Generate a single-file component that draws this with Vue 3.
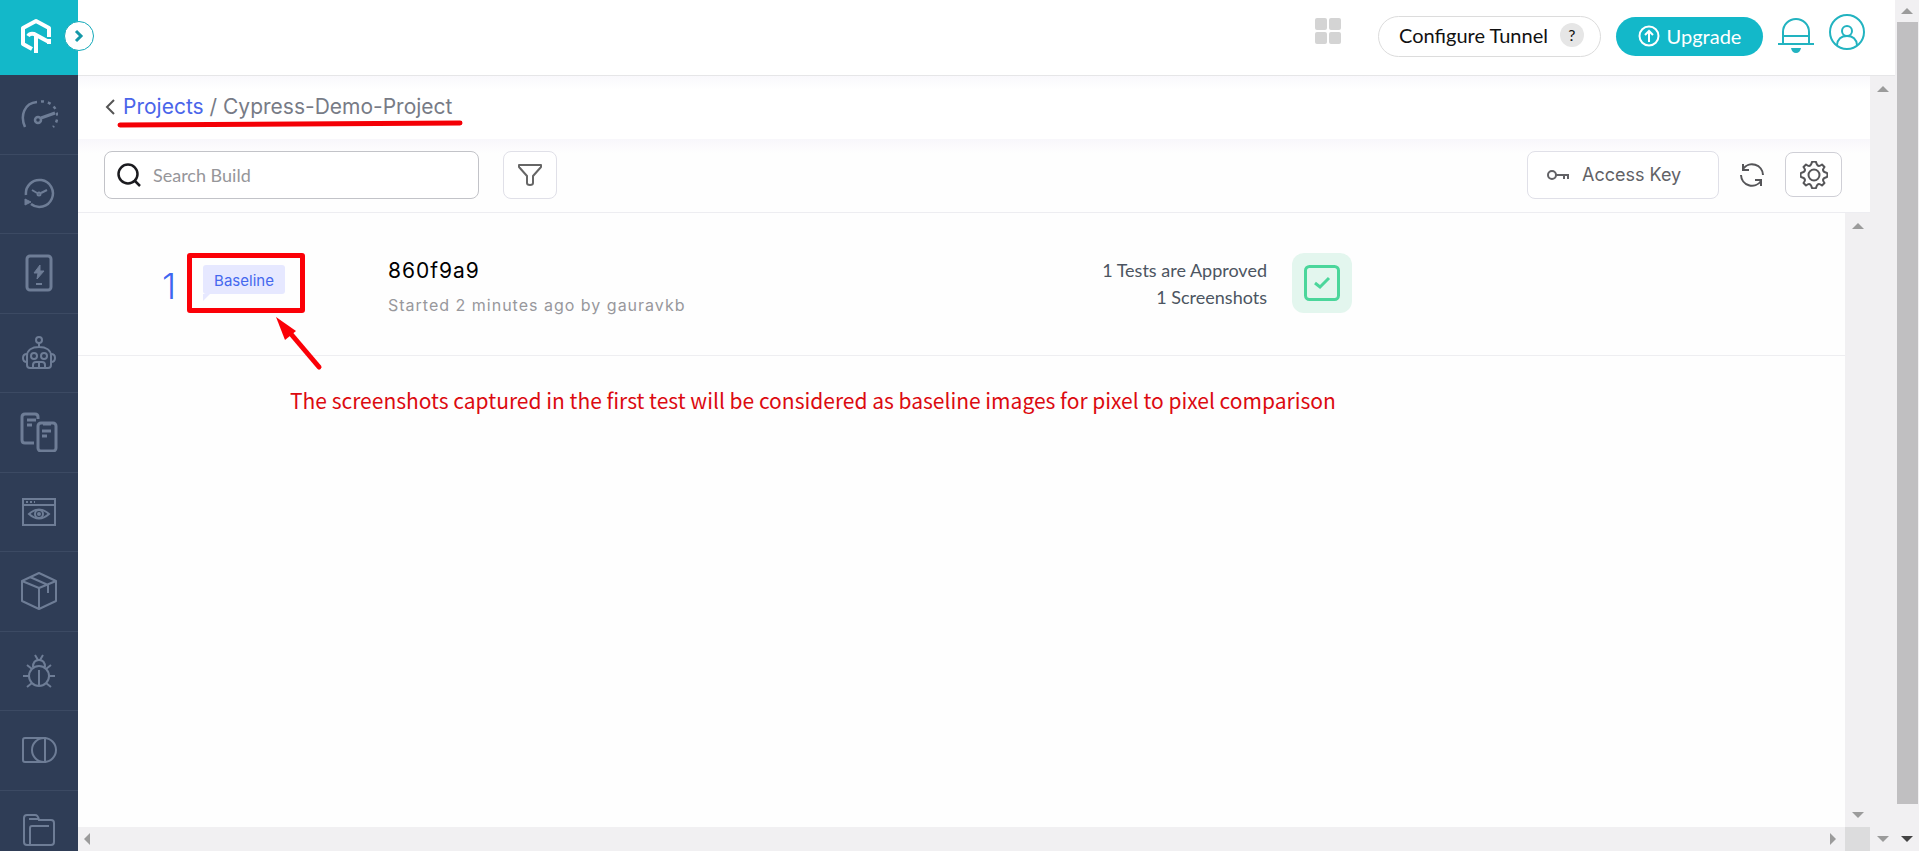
<script setup>
const navItems = [
  { name: 'Dashboard', icon: 'gauge' },
  { name: 'Real Time Testing', icon: 'history' },
  { name: 'Real Device', icon: 'device' },
  { name: 'Automation', icon: 'robot' },
  { name: 'App Automation', icon: 'phones' },
  { name: 'Visual UI Testing', icon: 'browser' },
  { name: 'Builds', icon: 'box' },
  { name: 'Issue Tracker', icon: 'bug' },
  { name: 'Integrations', icon: 'shapes' },
  { name: 'Projects', icon: 'folder' },
]
</script>

<template>
  <div class="shell">
    <aside class="sidebar">
      <a class="brand" href="#" aria-label="Home">
        <svg width="32" height="36" viewBox="0 0 32 36" fill="none" stroke="#fff" stroke-width="4">
          <path d="M12 31 L3 26 V10 L16 3 L29 10 V19" stroke-linejoin="round" />
          <path d="M8 18 Q10 15 14 16 L29 24 M29 21 V26" />
          <path d="M16 17 V35" />
        </svg>
      </a>
      <nav class="nav">
        <a v-for="item in navItems" :key="item.name" class="nav-item" href="#" :aria-label="item.name">
          <svg v-if="item.icon === 'gauge'" width="38" height="30" viewBox="0 0 38 30" fill="none" stroke="currentColor" stroke-width="2.500">
            <path d="M5 28 C0 17 4 4 17 3" />
            <circle cx="18" cy="21" r="3" />
            <path d="M21 19 L35 14" stroke-width="3" />
            <path d="M21 2.500 A15 15 0 0 1 33 28" stroke-dasharray="3 4" />
          </svg>
          <svg v-else-if="item.icon === 'history'" width="32" height="32" viewBox="0 0 32 32" fill="none" stroke="currentColor" stroke-width="2.500">
            <path d="M3 17 A13.500 13.500 0 1 1 8 26" />
            <circle cx="16" cy="16" r="1.500" stroke-width="2" />
            <path d="M9 12 L14 15 M18 15 L24 12" stroke-width="2" />
            <path d="M2 21 V27 L8 24 Z" fill="currentColor" stroke-width="1" />
          </svg>
          <svg v-else-if="item.icon === 'device'" width="28" height="38" viewBox="0 0 28 38" fill="none" stroke="currentColor" stroke-width="3">
            <rect x="2" y="2" width="24" height="34" rx="3" />
            <path d="M11 30 H17" stroke-width="2" />
            <path d="M15 11 L9 19 H13 L12 25 L19 17 H15 Z" fill="currentColor" stroke-width="1" />
          </svg>
          <svg v-else-if="item.icon === 'robot'" width="34" height="34" viewBox="0 0 34 34" fill="none" stroke="currentColor" stroke-width="2">
            <circle cx="17" cy="4" r="3" />
            <path d="M17 7 V11 M5 29 V20 C5 14 10 11 17 11 S29 14 29 20 V29 Q29 32 26 32 H8 Q5 32 5 29 Z" />
            <circle cx="12" cy="20" r="3" />
            <circle cx="22" cy="20" r="3" />
            <path d="M11 32 V29 Q11 26 14 26 H20 Q23 26 23 29 V32 M17 26 V32 M5 18 Q1 18 1 22 Q1 26 5 26 M29 18 Q33 18 33 22 Q33 26 29 26" />
          </svg>
          <svg v-else-if="item.icon === 'phones'" width="38" height="40" viewBox="0 0 38 40" fill="none" stroke="currentColor" stroke-width="3">
            <path d="M14 31 H5 Q2 31 2 28 V5 Q2 2 5 2 H15 Q18 2 18 5 V7" />
            <rect x="18" y="11" width="18" height="28" rx="3" />
            <path d="M7 8 H16 M7 13 H12 M22 19 H31 M22 24 H27 M23 12 H31" />
          </svg>
          <svg v-else-if="item.icon === 'browser'" width="34" height="28" viewBox="0 0 34 28" fill="none" stroke="currentColor" stroke-width="2">
            <rect x="1" y="1" width="32" height="26" />
            <path d="M1 7 H33" />
            <path d="M4 4 H13" stroke-dasharray="2 2" />
            <path d="M7 16 Q17 7 27 16 Q17 25 7 16 Z" />
            <circle cx="17" cy="16" r="4" />
            <circle cx="17" cy="16" r="1" />
          </svg>
          <svg v-else-if="item.icon === 'box'" width="36" height="38" viewBox="0 0 36 38" fill="none" stroke="currentColor" stroke-width="2" stroke-linejoin="round">
            <path d="M18 1 L35 9 V29 L18 37 L1 29 V9 Z M1 9 L18 16 L35 9 M18 16 V37 M9 5 L27 13 V21" />
          </svg>
          <svg v-else-if="item.icon === 'bug'" width="34" height="34" viewBox="0 0 34 34" fill="none" stroke="currentColor" stroke-width="2">
            <circle cx="17" cy="22" r="10" />
            <path d="M17 16 V32 M11 13 Q11 6 17 6 Q23 6 23 13 M16 6 L13 1 M18 6 L21 1 M1 22 H7 M27 22 H33 M5 11 L10 15 M29 11 L24 15 M5 33 L10 29 M29 33 L24 29" />
          </svg>
          <svg v-else-if="item.icon === 'shapes'" width="36" height="26" viewBox="0 0 36 26" fill="none" stroke="currentColor" stroke-width="2">
            <path d="M24 1 H4 Q2 1 2 3 V23 Q2 25 4 25 H24 Z" />
            <circle cx="23" cy="13" r="12" />
          </svg>
          <svg v-else width="32" height="32" viewBox="0 0 32 32" fill="none" stroke="currentColor" stroke-width="2">
            <path d="M4 31 Q1 31 1 28 V4 Q1 1 4 1 H12 Q15 1 16 6 H28 Q31 6 31 9 V28 Q31 31 28 31 Z" />
            <path d="M7 30 V14 Q7 12 9 12 H26 M6 5 H15" />
          </svg>
        </a>
      </nav>
      <button class="expand" type="button" aria-label="Expand menu">
        <svg width="12" height="14" viewBox="0 0 12 14" fill="none" stroke="#1498a8" stroke-width="3"><path d="M3 2 L8 7 L3 12" /></svg>
      </button>
    </aside>

    <div class="page">
      <header class="topbar">
        <button class="icon-btn apps" type="button" aria-label="Apps">
          <svg width="26" height="26" viewBox="0 0 26 26" fill="#d4d4d4"><rect width="12" height="12" rx="2" /><rect x="14" width="12" height="12" rx="2" /><rect y="14" width="12" height="12" rx="2" /><rect x="14" y="14" width="12" height="12" rx="2" /></svg>
        </button>
        <button class="tunnel" type="button">Configure Tunnel <span class="help">?</span></button>
        <button class="upgrade" type="button">
          <svg width="22" height="22" viewBox="0 0 22 22" fill="none" stroke="#fff" stroke-width="2"><circle cx="11" cy="11" r="9.500" /><path d="M11 17 V6 M7 10 L11 6 L15 10" /></svg>
          Upgrade
        </button>
        <button class="icon-btn bell" type="button" aria-label="Notifications">
          <svg width="36" height="36" viewBox="0 0 36 36" fill="none" stroke="#22b3c0" stroke-width="2"><path d="M5 26 V14 A13 13 0 0 1 31 14 V26 M0 26 H36 M5 18 H31" /><path d="M13 30 H23 Q22 35 18 35 Q14 35 13 30 Z" fill="#22b3c0" stroke="none" /></svg>
        </button>
        <button class="icon-btn user" type="button" aria-label="Account">
          <svg width="36" height="36" viewBox="0 0 36 36" fill="none" stroke="#22b3c0" stroke-width="2"><circle cx="18" cy="18" r="17" /><circle cx="18" cy="17" r="5" /><path d="M8 31 Q9 22 18 22 Q27 22 28 31" /></svg>
        </button>
      </header>

      <div class="body">
        <main class="content">
          <div class="crumbs">
            <a class="back" href="#" aria-label="Back"><svg width="10" height="16" viewBox="0 0 10 16" fill="none" stroke="#555" stroke-width="2"><path d="M9 1 L2 8 L9 15" /></svg></a>
            <nav class="trail" aria-label="Breadcrumb">
              <a href="#">Projects</a> / Cypress-Demo-Project
              <svg class="underline" width="346" height="8" viewBox="0 0 346 8"><path d="M3 5 L343 3" stroke="#f40006" stroke-width="5" stroke-linecap="round" /></svg>
            </nav>
          </div>

          <div class="toolbar">
            <label class="search">
              <svg width="24" height="24" viewBox="0 0 24 24" fill="none" stroke="#1b1b1f" stroke-width="2.500"><circle cx="11" cy="11" r="9.500" /><path d="M17 17 L23 23" /></svg>
              <input type="text" placeholder="Search Build" aria-label="Search Build" />
            </label>
            <button class="box filter" type="button" aria-label="Filter">
              <svg width="24" height="22" viewBox="0 0 24 22" fill="none" stroke="#666" stroke-width="2" stroke-linejoin="round"><path d="M1 1 H23 V3 L15 12 V19 Q15 21 12 21 Q9 21 9 19 V12 L1 3 Z" /></svg>
            </button>
            <button class="box access" type="button">
              <svg width="22" height="12" viewBox="0 0 22 12" fill="none" stroke="#626266" stroke-width="2"><circle cx="5" cy="6" r="4" /><path d="M9 6 H22 M17 6 V10 M21 6 V10" /></svg>
              Access Key
            </button>
            <button class="icon-btn" type="button" aria-label="Refresh">
              <svg width="24" height="24" viewBox="0 0 24 24" fill="none" stroke="#555558" stroke-width="2"><path d="M23 12 A11 11 0 0 0 3 6 M1 12 A11 11 0 0 0 21 18 M3 1 V7 H9 M21 23 V17 H15" /></svg>
            </button>
            <button class="box settings" type="button" aria-label="Settings">
              <svg width="28" height="28" viewBox="-14 -14 28 28" fill="none" stroke="#555558" stroke-width="2" stroke-linejoin="round">
                <path d="M-2 -13 Q0 -14 2 -13 Q3 -9 5 -9 Q6 -9 8 -10.500 L10.500 -8 Q9 -6 9 -5 Q9 -3 13 -2 Q14 0 13 2 Q9 3 9 5 Q9 6 10.500 8 L8 10.500 Q6 9 5 9 Q3 9 2 13 Q0 14 -2 13 Q-3 9 -5 9 Q-6 9 -8 10.500 L-10.500 8 Q-9 6 -9 5 Q-9 3 -13 2 Q-14 0 -13 -2 Q-9 -3 -9 -5 Q-9 -6 -10.500 -8 L-8 -10.500 Q-6 -9 -5 -9 Q-3 -9 -2 -13 Z" />
                <circle r="5.500" />
              </svg>
            </button>
          </div>

          <section class="builds">
            <div class="build-pane">
              <article class="build">
                <span class="number">1</span>
                <div class="marked">
                  <span class="tag">Baseline</span>
                  <svg class="arrow" width="54" height="60" viewBox="0 0 54 60"><path d="M49 55 L21 22" stroke="#fb0007" stroke-width="5" stroke-linecap="round" /><path d="M6 5 L26 19 L15 28 Z" fill="#fb0007" /></svg>
                </div>
                <div class="info">
                  <h2>860f9a9</h2>
                  <p>Started 2 minutes ago by gauravkb</p>
                </div>
                <div class="stats">1 Tests are Approved<br />1 Screenshots</div>
                <span class="approved">
                  <svg width="36" height="36" viewBox="0 0 36 36" fill="none" stroke="#4bd69b" stroke-width="3"><rect x="1.500" y="1.500" width="33" height="33" rx="4" /><path d="M11 18 L16 22 L25 13" /></svg>
                </span>
              </article>
              <p class="note">The screenshots captured in the first test will be considered as baseline images for pixel to pixel comparison</p>
            </div>
            <div class="vbar"><i class="tri up"></i><i class="tri down"></i></div>
            <div class="hbar"><i class="tri left"></i><i class="tri right"></i></div>
            <div class="corner"></div>
          </section>
        </main>
        <div class="vbar"><i class="tri up"></i><i class="tri down"></i></div>
      </div>
    </div>

    <div class="vbar outer"><i class="tri up"></i><div class="thumb"></div><i class="tri down dark"></i></div>
  </div>
</template>

<style>
body { overflow: hidden; }
</style>

<style scoped>
* { box-sizing: border-box; }
.shell { display: flex; height: 100vh; font-family: Lato, sans-serif; background: #fff; color: #111; }
button { font: inherit; color: inherit; background: none; border: 0; padding: 0; cursor: pointer; }
svg { display: block; flex: none; }
a { color: inherit; text-decoration: none; }

.sidebar { position: relative; z-index: 2; flex: none; width: 78px; display: flex; flex-direction: column; background: #2f3d56; }
.brand { flex: none; height: 75px; display: flex; align-items: center; justify-content: center; padding: 0 6px 4px 0; background: #13b8c9; }
.nav { flex: 1; min-height: 0; overflow: hidden; color: #6e7d96; }
.nav-item { height: 80px; display: flex; align-items: center; justify-content: center; padding: 0 1px 1px 0; border-bottom: 1px solid #3c4a63; }
.nav-item:nth-child(even) { height: 79px; }
.expand { position: absolute; left: 64px; top: 21px; width: 30px; height: 30px; display: flex; align-items: center; justify-content: center; border: 1px solid #13a9b9; border-radius: 50%; background: #fff; }

.page { flex: 1; min-width: 0; display: flex; flex-direction: column; }
.topbar { flex: none; height: 76px; display: flex; align-items: flex-start; justify-content: flex-end; padding: 16px 30px 0 0; border-bottom: 1px solid #e6e6e8; }
.apps { margin: 2px 37px 0 0; }
.tunnel { height: 41px; width: 223px; display: flex; align-items: center; justify-content: center; gap: 12px; padding: 0 0 3px 4px; border: 1px solid #dcdcdc; border-radius: 21px; font-size: 20px; }
.help { width: 24px; height: 24px; border-radius: 50%; background: #e6e6e6; font-size: 16px; line-height: 24px; }
.upgrade { height: 39px; width: 147px; margin: 1px 15px 0; padding-bottom: 1px; display: flex; align-items: center; justify-content: center; gap: 7px; border-radius: 20px; background: #13b8c9; color: #fff; font-size: 20px; }
.bell { margin-top: 2px; }
.user { margin: -2px 0 0 15px; }

.body { flex: 1; min-height: 0; display: flex; }
.content { flex: 1; min-width: 0; display: flex; flex-direction: column; }
.crumbs { flex: none; height: 63px; display: flex; align-items: center; gap: 8px; padding: 0 0 2px 27px; font-family: Inter, sans-serif; background: linear-gradient(#f9f8fc, #fff 14px); }
.trail { position: relative; font-size: 21px; color: #777b86; white-space: nowrap; }
.trail a { color: #4a65ea; }
.underline { position: absolute; left: -6px; bottom: -9px; }
.toolbar { flex: none; height: 74px; display: flex; align-items: center; padding: 0 28px 2px 26px; border-bottom: 1px solid #ededf1; background: linear-gradient(#f8f7fb, #fefefe 14px); }
.search { width: 375px; height: 48px; display: flex; align-items: center; gap: 10px; padding: 0 12px; border: 1px solid #c2c3c8; border-radius: 8px; background: #fff; }
.search input { flex: 1; min-width: 0; border: 0; outline: 0; background: none; font: 18px Lato, sans-serif; }
.search input::placeholder { color: #96969a; opacity: 1; }
.box { height: 48px; display: flex; align-items: center; justify-content: center; border: 1px solid #e0e0e8; border-radius: 8px; background: #fff; }
.filter { width: 54px; margin-left: 24px; }
.access { width: 192px; margin: 0 21px 0 auto; padding-left: 19px; justify-content: flex-start; gap: 13px; font: 18px Inter, sans-serif; color: #626266; }
.settings { width: 57px; height: 45px; margin-left: 21px; border-color: #cfcfd6; }

.builds { flex: 1; min-height: 0; display: grid; grid-template: 1fr 24px / 1fr 25px; }
.build-pane { min-width: 0; overflow: hidden; background: #fefefe; }
.build { height: 143px; display: flex; align-items: flex-start; padding: 40px 0 0 84px; border-bottom: 1px solid #eeeef1; }
.number { width: 25px; padding-top: 9px; font: 300 36px/48px Inter, sans-serif; color: #3f66f0; }
.marked { position: relative; width: 118px; height: 60px; padding: 7px 11px; border: 5px solid #fb0007; border-radius: 3px; }
.tag { position: relative; display: block; width: 82px; height: 29px; border-radius: 3px; background: #e6e8ff; color: #4568ee; font: 15px/31px Inter, sans-serif; text-align: center; }
.tag::after { content: ''; position: absolute; left: 0; top: 29px; border-top: 7px solid #e6e8ff; border-right: 7px solid transparent; }
.arrow { position: absolute; left: 78px; top: 54px; }
.info { margin-left: 83px; width: 600px; font-family: Inter, sans-serif; }
.info h2 { margin: 5px 0 0; font-size: 21px; line-height: 26px; font-weight: 400; letter-spacing: 1px; color: #000; }
.info p { margin: 9px 0 0; font-size: 16px; line-height: 24px; letter-spacing: 1px; color: #98989c; }
.stats { width: 279px; padding-top: 4px; font-size: 18px; line-height: 27px; text-align: right; color: #4c5561; }
.approved { width: 60px; height: 60px; margin-left: 25px; display: flex; align-items: center; justify-content: center; border-radius: 12px; background: #e3f6ee; }
.note { margin: 28px 0 0 212px; font: 21px/32px "Noto Sans CJK SC", sans-serif; color: #dc0a10; white-space: nowrap; }

.vbar { flex: none; width: 25px; display: flex; flex-direction: column; align-items: center; justify-content: space-between; padding: 10px 0 9px; background: #f1f0f2; }
.outer { width: 24px; padding: 8px 0 9px; }
.thumb { flex: 1; width: 21px; margin: 8px 0 32px; background: #c0bfc1; }
.hbar { display: flex; align-items: center; justify-content: space-between; padding: 0 9px 0 6px; background: #f1f0f2; }
.corner { background: #dcdcdd; }
.tri { border: 6px solid transparent; }
.up { border-top: 0; border-bottom-color: #9b9b9b; }
.down { border-bottom: 0; border-top-color: #9b9b9b; }
.left { border-left: 0; border-right-color: #9b9b9b; }
.right { border-right: 0; border-left-color: #9b9b9b; }
.dark { border-top-color: #444; }
</style>
